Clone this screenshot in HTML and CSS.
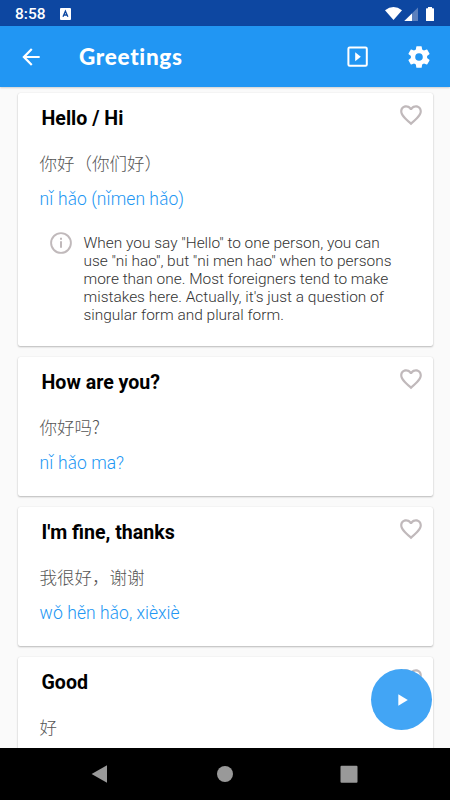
FILE: index.html
```html
<!DOCTYPE html>
<html lang="en">
<head>
<meta charset="utf-8">
<title>Greetings</title>
<link rel="stylesheet" href="styles.css">
</head>
<body>
<svg class="defs" aria-hidden="true">
  <symbol id="heart" viewBox="0 0 24 24"><path d="M16.5 3c-1.74 0-3.41.81-4.5 2.09C10.91 3.81 9.24 3 7.5 3 4.42 3 2 5.42 2 8.5c0 3.78 3.4 6.86 8.55 11.54L12 21.35l1.45-1.32C18.6 15.36 22 12.28 22 8.5 22 5.42 19.58 3 16.5 3zm-4.4 15.55l-.1.1-.1-.1C7.14 14.24 4 11.39 4 8.5 4 6.5 5.5 5 7.5 5c1.54 0 3.04.99 3.57 2.36h1.87C13.46 5.99 14.96 5 16.5 5c2 0 3.5 1.5 3.5 3.5 0 2.89-3.14 5.74-7.9 10.05z"/></symbol>
</svg>
<div class="screen">
  <div class="status">
    <span class="clock">8:58</span>
    <svg class="badge" viewBox="0 0 11 12"><rect width="11" height="12" rx="1" fill="#fff"/><path d="M3 8.8L5.4 3.2L7.9 8.8M3.9 7h3.1" fill="none" stroke="#0d47a1" stroke-width="1.3"/></svg>
    <svg class="signals" viewBox="0 0 50 16">
      <path d="M0 4.2Q8.5-2.3 17 4.2L8.5 14z" fill="#fff"/>
      <path d="M33 1.5V15H19.3z" fill="#5c80bd"/><path d="M27 7.4V15h-7.7z" fill="#fff"/>
      <path d="M43 1h4v1.2h1.4q.6 0 .6.6v11.6q0 .6-.6.6h-6.8q-.6 0-.6-.6V2.800q0-.6.6-.6H43z" fill="#fff"/>
    </svg>
  </div>
  <header class="appbar">
    <svg class="back" viewBox="0 0 24 24"><path d="M20 11H7.830l5.590-5.590L12 4l-8 8 8 8 1.410-1.410L7.830 13H20z"/></svg>
    <h1>Greetings</h1>
    <svg class="slides" viewBox="0 0 22 22"><rect x="1.400" y="1.400" width="18.400" height="18.400" rx="1.300" fill="none" stroke="#fff" stroke-width="2"/><path d="M8.200 6.200v9l5.600-4.500z"/></svg>
    <svg class="gear" viewBox="0 0 24 24"><path d="M19.430 12.980c.04-.32.07-.64.07-.98s-.03-.66-.07-.98l2.110-1.650c.19-.15.24-.42.12-.64l-2-3.460c-.12-.22-.39-.3-.61-.22l-2.490 1c-.52-.4-1.080-.73-1.690-.98l-.38-2.650C14.460 2.180 14.250 2 14 2h-4c-.25 0-.46.18-.49.42l-.38 2.650c-.61.25-1.170.59-1.690.98l-2.490-1c-.23-.09-.49 0-.61.22l-2 3.460c-.13.22-.07.49.12.64l2.110 1.650c-.04.32-.07.65-.07.98s.03.66.07.98l-2.110 1.650c-.19.15-.24.42-.12.64l2 3.460c.12.22.39.3.61.22l2.490-1c.52.4 1.080.73 1.690.98l.38 2.650c.03.24.24.42.49.42h4c.25 0 .46-.18.49-.42l.38-2.650c.61-.25 1.170-.59 1.690-.98l2.490 1c.23.09.49 0 .61-.22l2-3.460c.12-.22.07-.49-.12-.64zM12 15.500a3.500 3.500 0 1 1 0-7 3.500 3.500 0 0 1 0 7z"/></svg>
  </header>
  <main class="list">
    <article class="card">
      <div class="head"><h2>Hello / Hi</h2><svg class="heart"><use href="#heart"/></svg></div>
      <p class="hanzi" lang="zh">你好（你们好）</p>
      <p class="pinyin">nǐ hǎo (nǐmen hǎo)</p>
      <div class="note">
        <svg class="info" viewBox="0 0 22 22"><circle cx="11" cy="11" r="9.900" fill="none" stroke="#c0b9bb" stroke-width="1.900"/><path d="M10 9.300h2v6.500h-2zM10 5.800h2v2h-2z" fill="#c0b9bb"/></svg>
        <p>When you say "Hello" to one person, you can<br>use "ni hao", but "ni men hao" when to persons<br>more than one. Most foreigners tend to make<br>mistakes here. Actually, it's just a question of<br>singular form and plural form.</p>
      </div>
    </article>
    <article class="card">
      <div class="head"><h2>How are you?</h2><svg class="heart"><use href="#heart"/></svg></div>
      <p class="hanzi" lang="zh">你好吗?</p>
      <p class="pinyin">nǐ hǎo ma?</p>
    </article>
    <article class="card">
      <div class="head"><h2>I'm fine, thanks</h2><svg class="heart"><use href="#heart"/></svg></div>
      <p class="hanzi" lang="zh">我很好，谢谢</p>
      <p class="pinyin">wǒ hěn hǎo, xièxiè</p>
    </article>
    <article class="card">
      <div class="head"><h2>Good</h2><svg class="heart"><use href="#heart"/></svg></div>
      <p class="hanzi" lang="zh">好</p>
    </article>
    <div class="fab"><svg viewBox="0 0 10 12"><path d="M.3.300v11.400L9.800 6z"/></svg></div>
  </main>
  <nav class="nav">
    <svg viewBox="0 0 18 18"><path d="M16 .2v17.600L.6 9z"/></svg>
    <svg viewBox="0 0 18 18"><circle cx="9" cy="9" r="8"/></svg>
    <svg viewBox="0 0 18 18"><rect x=".5" y=".7" width="17" height="17" rx="1"/></svg>
  </nav>
</div>
</body>
</html>
```
FILE: styles.css
```css
* { box-sizing: border-box; margin: 0; padding: 0; }
body { font-family: Roboto, "Noto Sans CJK SC", sans-serif; background: #fafafa; }
svg { display: block; flex: none; fill: #fff; }
.defs { position: absolute; width: 0; height: 0; }
.screen { width: 450px; height: 800px; display: flex; flex-direction: column; overflow: hidden; }
.status { height: 26px; flex: none; background: #0d47a1; color: #fff; display: flex; align-items: center; padding: 1px 15px 0; }
.clock { font-size: 15.5px; font-weight: 500; line-height: 24px; width: 45px; }
.badge { width: 11px; height: 12px; }
.signals { width: 50px; height: 16px; margin-left: auto; }
.appbar { height: 61px; flex: none; background: #2196f3; display: flex; align-items: center; padding: 0 18px; box-shadow: 0 1px 2px rgba(0,0,0,.18); z-index: 1; }
.back { width: 26px; height: 26px; }
.appbar h1 { font: 900 22.5px/30px Lato, sans-serif; color: #fff; margin-left: 35px; letter-spacing: .7px; }
.slides { width: 22px; height: 22px; margin-left: auto; }
.gear { width: 26px; height: 26px; margin-left: 37px; }
.list { flex: 1; min-height: 0; position: relative; overflow: hidden; background: #fafafa; padding: 6px 17.5px 0 17.5px; display: flex; flex-direction: column; gap: 11px; }
.card { flex: none; min-height: 139px; background: #fff; border-radius: 2px; box-shadow: 0 1px 2px rgba(0,0,0,.25), 0 0 1px rgba(0,0,0,.12); padding: 9px 9px 20px 22px; }
.head { display: flex; justify-content: space-between; height: 32px; }
.head h2 { font-size: 19.6px; font-weight: 700; line-height: 34px; color: #000; padding-left: 2px; }
.heart { width: 26px; height: 26px; fill: #c0b9bb; }
.hanzi { font-family: "Noto Sans CJK SC", sans-serif; font-weight: 300; font-size: 17.5px; line-height: 26px; color: #555; margin-top: 16px; }
.pinyin { font-weight: 300; font-size: 17.5px; line-height: 26px; color: #2196f3; margin-top: 10px; }
.note { display: flex; align-items: flex-start; gap: 12px; padding: 19px 0 2px 10px; }
.info { width: 22px; height: 22px; margin-top: 1px; }
.note p { font-weight: 300; font-size: 15.45px; line-height: 18px; color: #333; white-space: nowrap; padding-top: 3px; }
.fab { position: absolute; right: 18px; bottom: 18px; width: 61px; height: 61px; border-radius: 50%; background: #42a5f5; display: flex; align-items: center; justify-content: center; }
.fab svg { width: 10px; height: 12px; margin-left: 2px; }
.nav { height: 52px; flex: none; background: #000; display: flex; justify-content: center; align-items: center; gap: 106.500px; padding: 0 1px 1px 0; }
.nav svg { width: 18px; height: 18px; fill: #999; }
```
